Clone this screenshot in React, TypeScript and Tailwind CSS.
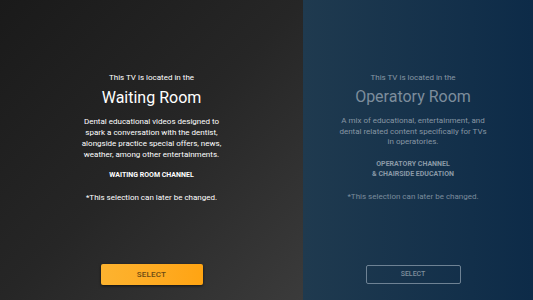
export default function App() {
  return (
    <div className="flex h-[300px] w-[533px] overflow-hidden" style={{ fontFamily: "Roboto, 'Open Sans', sans-serif" }}>
      {/* WAITING ROOM */}
      <div className="flex w-[303px] flex-col items-center bg-gradient-to-br from-[#1a1a1a] via-[#262626] to-[#3b3b3b] pt-[73px] text-white">
        <p className="text-[8px] leading-[10px]">This TV is located in the</p>
        <h2 className="mt-[5px] text-[16px] leading-[20px]">Waiting Room</h2>
        <p className="mt-[8px] w-[140px] text-center text-[8px] leading-[11px]">
          Dental educational videos designed to spark a conversation with the dentist, alongside practice special offers, news, weather, among other entertainments.
        </p>
        <p className="mt-[10px] text-[7px] font-bold leading-[10px]">WAITING ROOM CHANNEL</p>
        <p className="mt-[13px] text-[8px] leading-[10px]">*This selection can later be changed.</p>
        <button className="mt-auto mb-[15px] h-[21px] w-[102px] rounded-[2px] bg-gradient-to-r from-[#fdb32f] to-[#ffa412] text-[8px] font-medium tracking-wide text-[#6b4a14] shadow-[0_1px_3px_rgba(0,0,0,0.6)]">
          SELECT
        </button>
      </div>

      {/* OPERATORY ROOM */}
      <div className="flex flex-1 flex-col items-center bg-gradient-to-r from-[#1f3a4f] to-[#0d2b48] pr-[10px] pt-[73px] text-[#8796a4]">
        <p className="text-[8px] leading-[10px]">This TV is located in the</p>
        <h2 className="mt-[4px] text-[16px] leading-[20px] text-[#7d8d9c]">Operatory Room</h2>
        <p className="mt-[9px] w-[150px] text-center text-[8px] leading-[10.5px]">
          A mix of educational, entertainment, and dental related content specifically for TVs in operatories.
        </p>
        <p className="mt-[11px] text-center text-[7px] font-bold leading-[10px] text-[#8a99a7]">
          OPERATORY CHANNEL
          <br />& CHAIRSIDE EDUCATION
        </p>
        <p className="mt-[13px] text-[8px] leading-[10px] text-[#7b8c9c]">*This selection can later be changed.</p>
        <button className="mt-auto mb-[16px] h-[19px] w-[95px] rounded-[2px] border border-[#6e8294] text-[7px] font-medium text-[#7f8e9c]">
          SELECT
        </button>
      </div>
    </div>
  )
}
